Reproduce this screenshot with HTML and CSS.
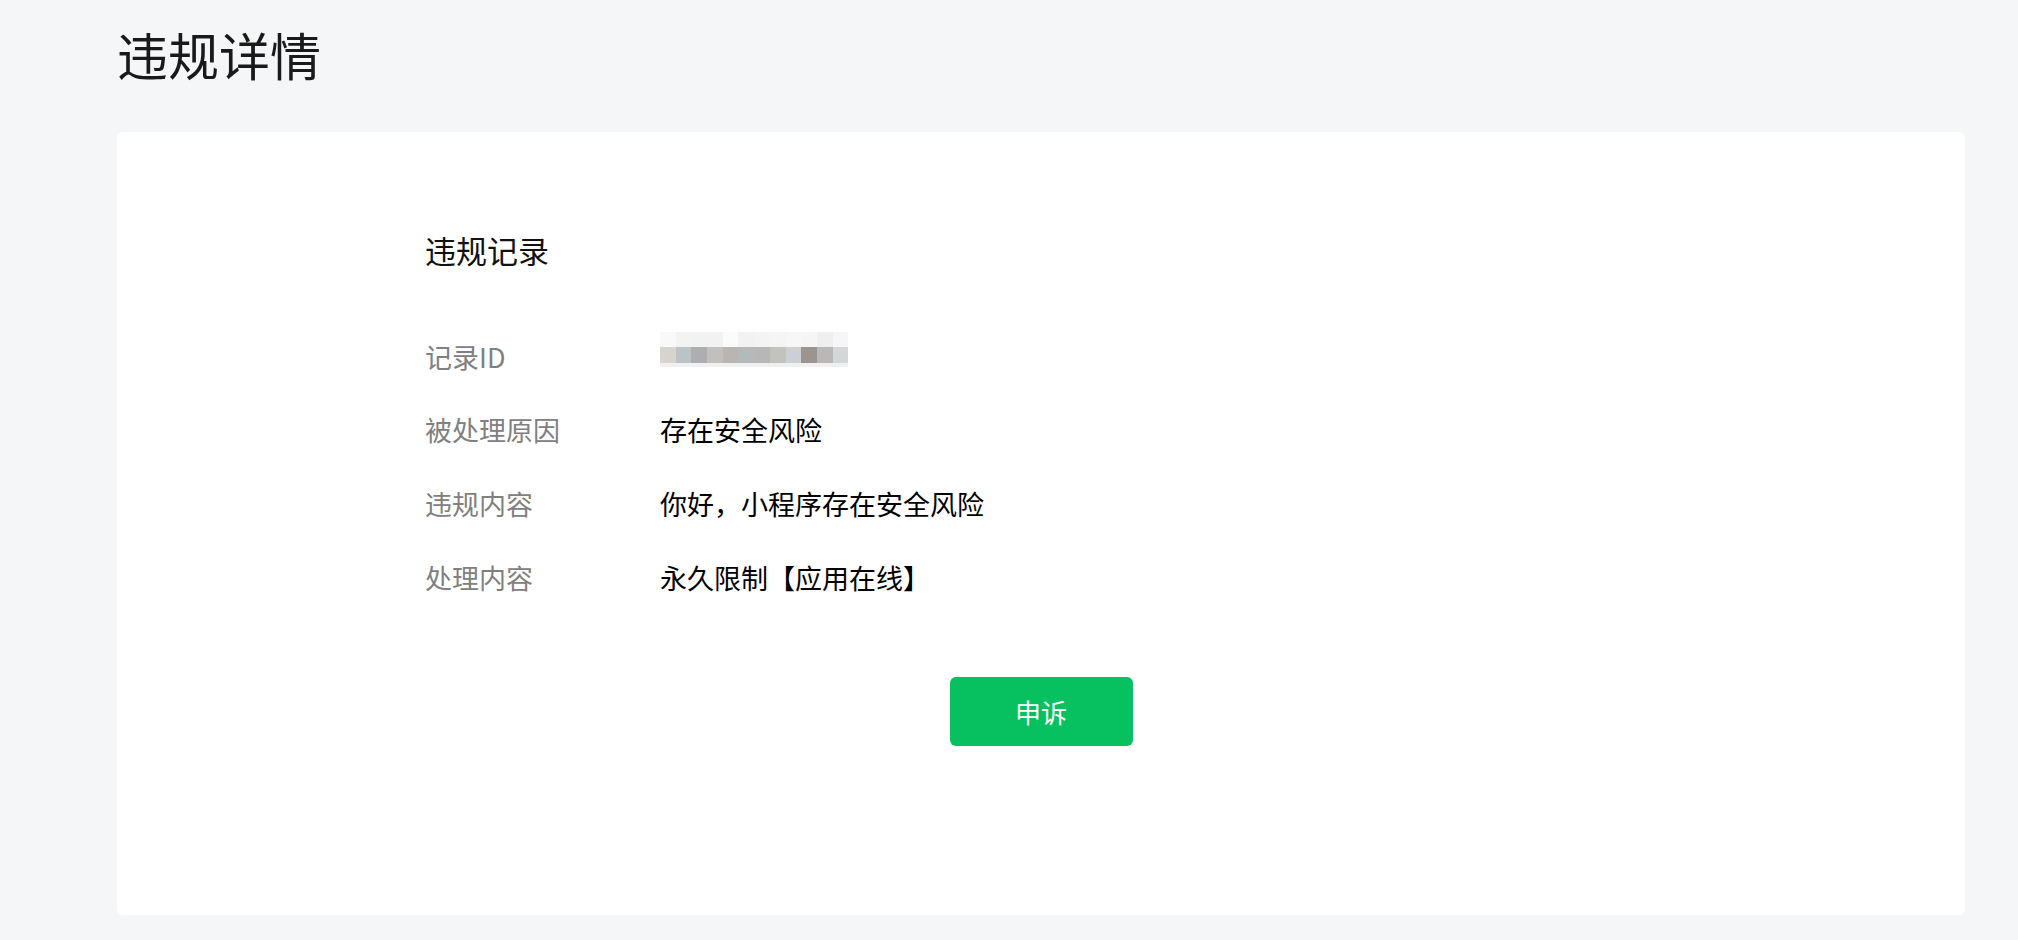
FILE: index.html
```html
<!DOCTYPE html>
<html lang="zh-CN">
<head>
<meta charset="utf-8">
<title>违规详情</title>
<link rel="stylesheet" href="styles.css">
</head>
<body>
<div class="page">
  <h1 class="page-title">违规详情</h1>
  <div class="card">
    <div class="record">
      <h2 class="record-title">违规记录</h2>
      <div class="rows">
        <div class="row">
          <div class="label">记录ID</div>
          <div class="value">
            <div class="mosaic" aria-label="已打码">
              <span class="col c1"><i></i><i></i><i></i></span>
              <span class="col c2"><i></i><i></i><i></i></span>
              <span class="col c3"><i></i><i></i><i></i></span>
              <span class="col c4"><i></i><i></i><i></i></span>
              <span class="col c5"><i></i><i></i><i></i></span>
              <span class="col c6"><i></i><i></i><i></i></span>
              <span class="col c7"><i></i><i></i><i></i></span>
              <span class="col c8"><i></i><i></i><i></i></span>
              <span class="col c9"><i></i><i></i><i></i></span>
              <span class="col c10"><i></i><i></i><i></i></span>
              <span class="col c11"><i></i><i></i><i></i></span>
              <span class="col c12"><i></i><i></i><i></i></span>
            </div>
          </div>
        </div>
        <div class="row">
          <div class="label">被处理原因</div>
          <div class="value">存在安全风险</div>
        </div>
        <div class="row">
          <div class="label">违规内容</div>
          <div class="value">你好，小程序存在安全风险</div>
        </div>
        <div class="row">
          <div class="label">处理内容</div>
          <div class="value">永久限制【应用在线】</div>
        </div>
      </div>
    </div>
    <div class="actions">
      <button class="btn-primary" type="button">申诉</button>
    </div>
  </div>
</div>
</body>
</html>
```

FILE: styles.css
```css
* { box-sizing: border-box; }

html, body {
  margin: 0;
  padding: 0;
}

body {
  background: #f5f6f8;
  font-family: "Noto Sans CJK SC", "Noto Sans", sans-serif;
  color: rgba(0, 0, 0, 0.9);
}

.page {
  padding: 18px 53px 24px 117px;
}

.page-title {
  margin: 0;
  font-size: 51px;
  line-height: 72px;
  font-weight: 400;
  color: #1a1a1a;
}

.card {
  margin-top: 42px;
  background: #ffffff;
  border-radius: 6px;
  padding: 96px 0 169px;
}

.record {
  padding-left: 308px;
}

.record-title {
  margin: 0;
  font-size: 31px;
  line-height: 43px;
  font-weight: 400;
  color: #111;
}

.rows {
  margin-top: 49px;
}

.row {
  display: flex;
  align-items: center;
  height: 74px;
  font-size: 27px;
}

.row:first-child {
  height: 72px;
}

.label {
  width: 235px;
  flex: none;
  color: #808080;
}

.value {
  color: #000;
}

.mosaic {
  display: flex;
  margin-bottom: 14px;
}

.col {
  display: flex;
  flex-direction: column;
  width: 15.7px;
}

.col i {
  display: block;
}

.col i:nth-child(1) { height: 15px; background: #f5f5f5; }
.col i:nth-child(2) { height: 16px; }
.col i:nth-child(3) { height: 4px; background: #f0f0f0; }

.c1 i:nth-child(2) { background: #d6d4cc; }
.c2 i:nth-child(2) { background: #bcc3c7; }
.c3 i:nth-child(2) { background: #aeadaf; }
.c4 i:nth-child(2) { background: #c1c0bd; }
.c5 i:nth-child(2) { background: #bab5b0; }
.c6 i:nth-child(2) { background: #b6b9ba; }
.c7 i:nth-child(2) { background: #b8b7b7; }
.c8 i:nth-child(2) { background: #c2c3bd; }
.c9 i:nth-child(2) { background: #ccd0d3; }
.c10 i:nth-child(2) { background: #9c9490; }
.c11 i:nth-child(2) { background: #bab8b6; }
.c12 i:nth-child(2) { background: #d3d7d8; }

.c1 i:nth-child(1) { background: #f9f9f9; }
.c2 i:nth-child(1) { background: #f3f3f3; }
.c3 i:nth-child(1) { background: #f1f2f2; }
.c4 i:nth-child(1) { background: #f2f2f2; }
.c5 i:nth-child(1) { background: #fafbfb; }
.c6 i:nth-child(1) { background: #f2f2f2; }
.c7 i:nth-child(1) { background: #f4f4f4; }
.c8 i:nth-child(1) { background: #f5f5f5; }
.c9 i:nth-child(1) { background: #f7f7f7; }
.c10 i:nth-child(1) { background: #f5f5f5; }
.c11 i:nth-child(1) { background: #efefef; }
.c12 i:nth-child(1) { background: #f6f6f6; }

.actions {
  display: flex;
  justify-content: center;
  margin-top: 63px;
}

.btn-primary {
  width: 183px;
  height: 69px;
  border: 0;
  border-radius: 6px;
  background: #07c160;
  color: #ffffff;
  font-family: "Noto Sans CJK SC", "Noto Sans", sans-serif;
  font-size: 26px;
  cursor: pointer;
}
```
